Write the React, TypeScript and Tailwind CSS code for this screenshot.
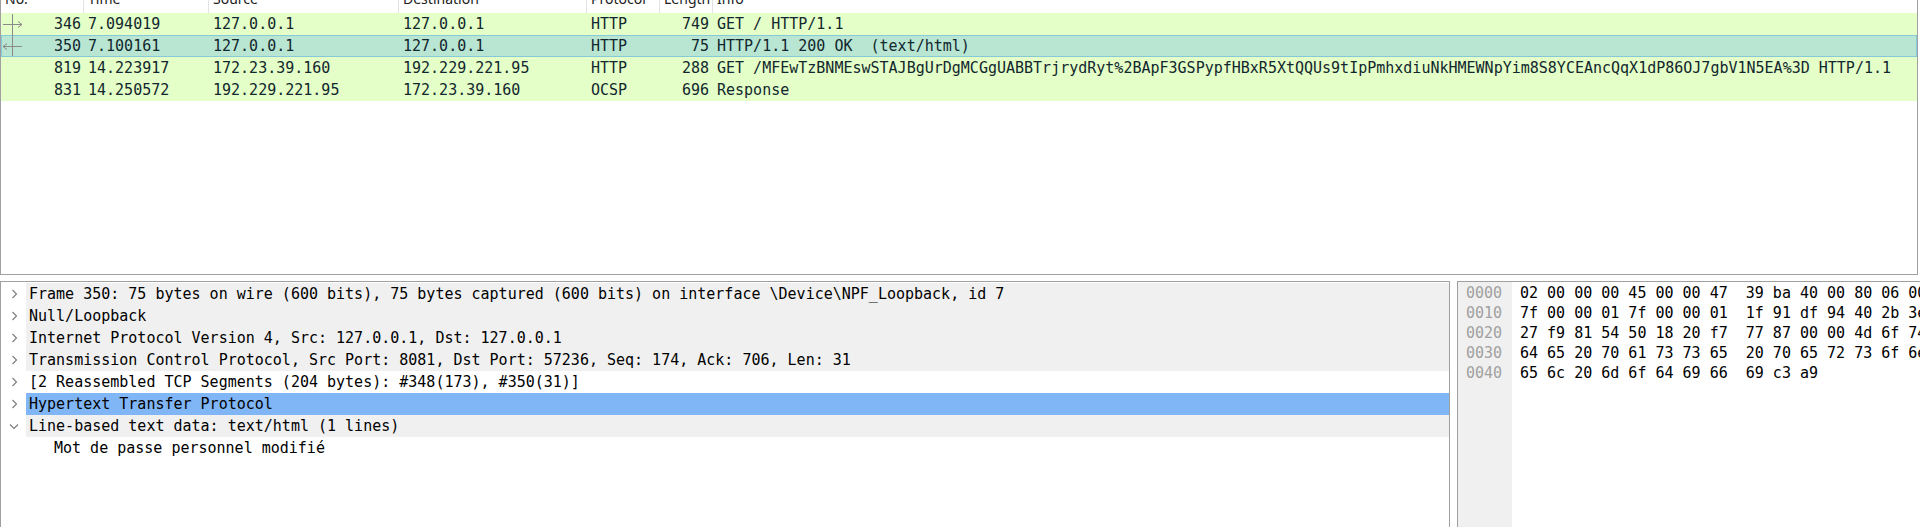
import React from "react";

const mono = { fontFamily: '"DejaVu Sans Mono", "Liberation Mono", monospace' };

type Pkt = {
  no: string;
  time: string;
  src: string;
  dst: string;
  proto: string;
  len: string;
  info: string;
  selected?: boolean;
  mark?: "req" | "resp";
};

const packets: Pkt[] = [
  { no: "346", time: "7.094019", src: "127.0.0.1", dst: "127.0.0.1", proto: "HTTP", len: "749", info: "GET / HTTP/1.1", mark: "req" },
  { no: "350", time: "7.100161", src: "127.0.0.1", dst: "127.0.0.1", proto: "HTTP", len: "75", info: "HTTP/1.1 200 OK  (text/html)", selected: true, mark: "resp" },
  { no: "819", time: "14.223917", src: "172.23.39.160", dst: "192.229.221.95", proto: "HTTP", len: "288", info: "GET /MFEwTzBNMEswSTAJBgUrDgMCGgUABBTrjrydRyt%2BApF3GSPypfHBxR5XtQQUs9tIpPmhxdiuNkHMEWNpYim8S8YCEAncQqX1dP86OJ7gbV1N5EA%3D HTTP/1.1" },
  { no: "831", time: "14.250572", src: "192.229.221.95", dst: "172.23.39.160", proto: "OCSP", len: "696", info: "Response" },
];

function Mark({ kind }: { kind: "req" | "resp" }) {
  return (
    <svg className="absolute left-0 top-0" width="24" height="22" viewBox="0 0 24 22">
      <line x1="2" y1="11.5" x2="21" y2="11.5" stroke="#8a8a8a" strokeWidth="1" />
      {kind === "req" ? (
        <>
          <polyline points="17,8.5 21,11.5 17,14.5" fill="none" stroke="#8a8a8a" strokeWidth="1" />
          <line x1="11.5" y1="1" x2="11.5" y2="22" stroke="#8a8a8a" strokeWidth="1" />
        </>
      ) : (
        <>
          <polyline points="6,8.5 2,11.5 6,14.5" fill="none" stroke="#8a8a8a" strokeWidth="1" />
          <line x1="11.5" y1="0" x2="11.5" y2="21" stroke="#8a8a8a" strokeWidth="1" />
        </>
      )}
    </svg>
  );
}

const headers = ["No.", "Time", "Source", "Destination", "Protocol", "Length", "Info"];

function Chevron({ open }: { open?: boolean }) {
  return open ? (
    <svg width="10" height="7" viewBox="0 0 10 7" className="ml-[8px]">
      <polyline points="1,1.5 5,5.5 9,1.5" fill="none" stroke="#7a7a7a" strokeWidth="1.1" />
    </svg>
  ) : (
    <svg width="7" height="10" viewBox="0 0 7 10" className="ml-[10px]">
      <polyline points="1.5,1 5.5,5 1.5,9" fill="none" stroke="#7a7a7a" strokeWidth="1.1" />
    </svg>
  );
}

type Det = { text: string; bg: string; open?: boolean; child?: boolean };

const details: Det[] = [
  { text: "Frame 350: 75 bytes on wire (600 bits), 75 bytes captured (600 bits) on interface \\Device\\NPF_Loopback, id 7", bg: "bg-[#f0f0f0]" },
  { text: "Null/Loopback", bg: "bg-[#f0f0f0]" },
  { text: "Internet Protocol Version 4, Src: 127.0.0.1, Dst: 127.0.0.1", bg: "bg-[#f0f0f0]" },
  { text: "Transmission Control Protocol, Src Port: 8081, Dst Port: 57236, Seq: 174, Ack: 706, Len: 31", bg: "bg-[#f0f0f0]" },
  { text: "[2 Reassembled TCP Segments (204 bytes): #348(173), #350(31)]", bg: "bg-white" },
  { text: "Hypertext Transfer Protocol", bg: "bg-[#80b6f6]" },
  { text: "Line-based text data: text/html (1 lines)", bg: "bg-[#f0f0f0]", open: true },
  { text: "Mot de passe personnel modifié", bg: "bg-white", child: true },
];

const hexOffsets = ["0000", "0010", "0020", "0030", "0040"];
const hexLines = [
  "02 00 00 00 45 00 00 47  39 ba 40 00 80 06 00 00",
  "7f 00 00 01 7f 00 00 01  1f 91 df 94 40 2b 3e 2c",
  "27 f9 81 54 50 18 20 f7  77 87 00 00 4d 6f 74 20",
  "64 65 20 70 61 73 73 65  20 70 65 72 73 6f 6e 6e",
  "65 6c 20 6d 6f 64 69 66  69 c3 a9",
];

export default function App() {
  return (
    <div className="w-[1920px] h-[527px] bg-white overflow-hidden flex flex-col">
      {/* Packet list */}
      <div className="w-[1918px] h-[275px] shrink-0 border-l border-r border-b border-[#a0a0a0] bg-white overflow-hidden">
        <div
          className="grid grid-cols-[83px_125px_190px_188px_73px_53px_1fr] h-[13px] overflow-hidden bg-white text-[14px] text-[#222]"
          style={{ fontFamily: '"Noto Sans", "Open Sans", sans-serif' }}
        >
          {headers.map((h, i) => (
            <div key={h} className={`h-[13px] overflow-hidden pl-[4px] ${i < 6 ? "border-r border-[#e3e3e3]" : ""}`}>
              <div className="-mt-[9px] leading-[16px] whitespace-nowrap">{h}</div>
            </div>
          ))}
        </div>
        <div className="text-[15px] text-[#12272e]" style={mono}>
          {packets.map((p) => (
            <div
              key={p.no}
              className={`relative grid grid-cols-[83px_125px_190px_188px_73px_53px_1fr] h-[22px] leading-[22px] whitespace-pre ${
                p.selected ? "bg-[#b8e6d2] shadow-[inset_0_0_0_1px_#86c9d8]" : "bg-[#e4ffc7]"
              }`}
            >
              <div className="relative text-right pr-[3px]">
                {p.mark && <Mark kind={p.mark} />}
                <span className="relative">{p.no}</span>
              </div>
              <div className="pl-[4px] overflow-hidden">{p.time}</div>
              <div className="pl-[4px] overflow-hidden">{p.src}</div>
              <div className="pl-[4px] overflow-hidden">{p.dst}</div>
              <div className="pl-[4px] overflow-hidden">{p.proto}</div>
              <div className="text-right pr-[4px] overflow-hidden">{p.len}</div>
              <div className="pl-[4px] overflow-hidden">{p.info}</div>
            </div>
          ))}
        </div>
      </div>

      {/* Splitter */}
      <div className="h-[6px] shrink-0 bg-white" />

      {/* Bottom panes */}
      <div className="flex flex-1 min-h-0">
        <div className="w-[1450px] shrink-0 border-l border-t border-r border-[#a0a0a0] bg-white pt-[1px] text-[15px] text-black" style={mono}>
          {details.map((d, i) => (
            <div key={i} className="flex h-[22px] leading-[22px] items-stretch">
              <div className="w-[25px] shrink-0 flex items-center">
                {!d.child && <Chevron open={d.open} />}
              </div>
              <div className={`flex-1 whitespace-pre overflow-hidden ${d.bg} ${d.child ? "pl-[28px]" : "pl-[3px]"}`}>
                {d.text}
              </div>
            </div>
          ))}
        </div>
        <div className="w-[7px] shrink-0" />
        <div className="flex-1 min-w-0 border-l border-t border-[#a0a0a0] flex text-[15px] overflow-hidden" style={mono}>
          <div className="w-[54px] shrink-0 bg-[#f0f0f0] pl-[8px] pt-[1px] text-[#a0a0a0]">
            {hexOffsets.map((o) => (
              <div key={o} className="h-[20px] leading-[20px]">{o}</div>
            ))}
          </div>
          <div className="flex-1 min-w-0 pl-[8px] pt-[1px] text-black">
            {hexLines.map((l, i) => (
              <div key={i} className="h-[20px] leading-[20px] whitespace-pre">{l}</div>
            ))}
          </div>
        </div>
      </div>
    </div>
  );
}
